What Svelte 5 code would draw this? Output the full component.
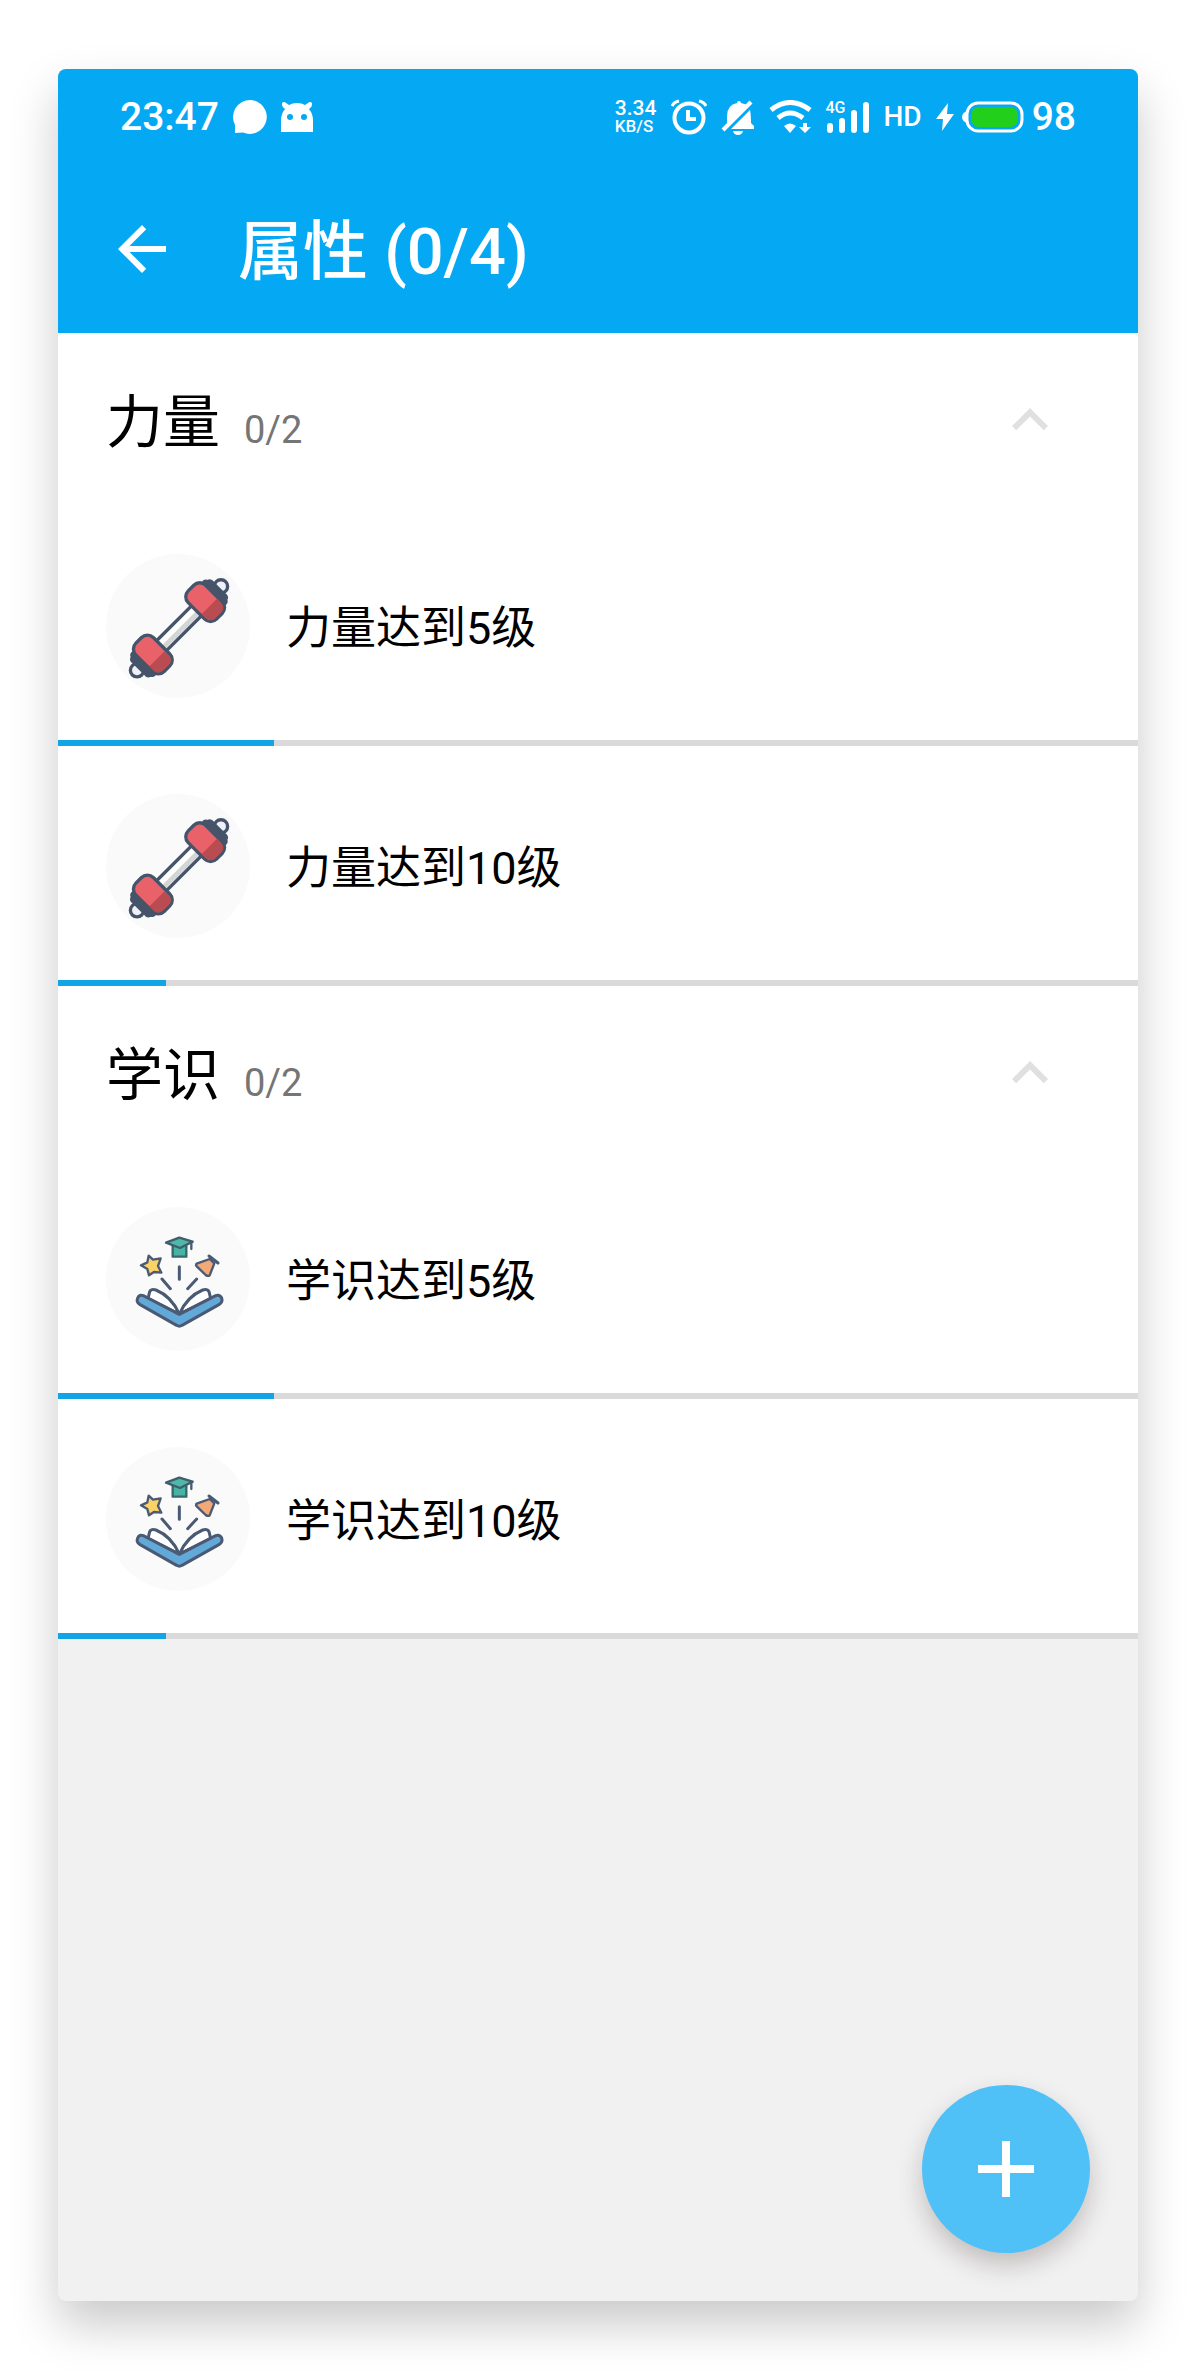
<script>
  let groups = $state([
    {
      name: '力量',
      icon: 'dumbbell',
      done: 0,
      open: true,
      items: [
        { level: 5, progress: 20 },
        { level: 10, progress: 10 },
      ],
    },
    {
      name: '学识',
      icon: 'book',
      done: 0,
      open: true,
      items: [
        { level: 5, progress: 20 },
        { level: 10, progress: 10 },
      ],
    },
  ]);

  const total = $derived(groups.reduce((n, g) => n + g.items.length, 0));
  const done = $derived(groups.reduce((n, g) => n + g.done, 0));
</script>

{#snippet dumbbell()}
  <svg class="picture" viewBox="48 42 432 432" aria-hidden="true">
    <g transform="translate(267 265) rotate(-45)" stroke="#46546a" stroke-width="10" stroke-linejoin="round">
      <rect x="-76" y="-21" width="152" height="42" fill="#fff" />
      <rect x="-72" y="0" width="144" height="15" fill="#d3d5d7" stroke="none" />
      {#each [1, -1] as side}
        <g transform="scale({side} 1)">
          <circle cx="178" cy="0" r="20" fill="#eef1fa" />
          <path d="M146 -44Q156 -48 160 -38Q170 -36 168 -24L168 24Q170 36 160 38Q156 48 146 44Z" fill="#46546a" />
          <rect x="74" y="-60" width="74" height="120" rx="25" fill="#e9626a" />
          <path d="M79 18H143V35Q143 55 123 55H99Q79 55 79 35Z" fill="#b94c50" stroke="none" />
        </g>
      {/each}
    </g>
  </svg>
{/snippet}

{#snippet book()}
  <svg class="picture" viewBox="48 51 432 432" aria-hidden="true">
    <g stroke="#4a5a72" stroke-width="9" stroke-linejoin="round" stroke-linecap="round" fill="none">
      <path d="M174 326L179 305Q184 296 198 300Q244 319 268 372Z" fill="#fff" />
      <path d="M362 326L357 305Q352 296 338 300Q292 319 268 372Z" fill="#fff" />
      <path d="M143 324Q148 312 160 317L268 373L377 317Q389 312 395 324Q399 336 388 343L276 406Q268 411 260 406L149 343Q138 336 143 324Z" fill="#62a9da" />
      <path d="M268 230V268M216 267L241 296M320 267L293 296" />
      <g stroke-width="7">
        <path d="M248 167V200H289V167" fill="#47b3a5" stroke="#3a6670" />
        <path d="M228 158L268 143L308 155L270 174Z" fill="#4eb8ab" stroke="#3f5f6c" />
        <path d="M304 157V177" />
        <path d="M176 197L189 209L212 205L204 228L214 248L192 246L177 256L172 237L153 226L172 217Z" fill="#fbd268" />
        <path d="M320 221L359 207L373 220L359 256Q354 260 347 255L321 230Q316 225 320 221Z" fill="#f2a877" />
        <path d="M357 198L384 219" stroke-width="9" />
      </g>
    </g>
  </svg>
{/snippet}

<main class="phone">
  <header class="top">
    <div class="status">
      <div class="cluster">
        <span class="figure">23:47</span>
        <svg width="34" height="36" viewBox="0 0 34 36" fill="#fff" aria-hidden="true">
          <path d="M17 1A17 17 0 1 1 10 33.600L2 34V26A17 17 0 0 1 17 1Z" />
        </svg>
        <svg width="32" height="30" viewBox="0 0 32 30" aria-hidden="true">
          <path d="M1 3L1 1Q3 -1 5 1L8 3Q11 1 16 1T24 3L27 1Q29 -1 31 1L31 3Q31 5 28 7Q32 12 32 18V30H0V18Q0 12 4 7Q1 5 1 3Z" fill="#fff" />
          <circle cx="9" cy="15" r="3" fill="#05a8f3" />
          <circle cx="23" cy="15" r="3" fill="#05a8f3" />
        </svg>
      </div>
      <div class="cluster">
        <span class="speed"><span class="rate">3.34</span><span class="unit">KB/S</span></span>
        <svg width="36" height="36" viewBox="0 0 36 36" fill="none" stroke="#fff" aria-hidden="true">
          <circle cx="18" cy="19" r="14.500" stroke-width="4" />
          <path d="M17 11V20H25" stroke-width="4" />
          <path d="M1 7Q3 3 8 2M28 2Q33 3 35 7" stroke-width="3" />
        </svg>
        <svg width="34" height="36" viewBox="0 0 34 36" fill="#fff" aria-hidden="true">
          <path d="M6 24V17Q6 6 16 4Q16 2 18 2T20 4Q24 5 26 6L6 26Z" />
          <path d="M12 28L29 11Q30 15 30 24L33 27V30H10Z" />
          <path d="M12 32H22Q21 36 17 36T12 32Z" />
          <path d="M2 31L30 3" stroke="#fff" stroke-width="4" />
        </svg>
        <svg width="43" height="34" viewBox="0 0 43 34" fill="none" stroke="#fff" aria-hidden="true">
          <path d="M2 10Q21 -5 41 10M9 18Q21 8 34 18" stroke-width="5" />
          <path d="M15 26Q21 21 27 26L21 33Z" fill="#fff" stroke="none" />
          <path d="M34 23H38V27H42L36 33L30 27H34Z" fill="#fff" stroke="none" />
        </svg>
        <span class="signal">
          <span class="network">4G</span>
          <svg width="44" height="34" viewBox="0 0 44 34" fill="none" stroke="#fff" stroke-width="6" stroke-linecap="round" aria-hidden="true">
            <path d="M4 26V30M16 21V30M28 13V30M40 5V30" />
          </svg>
        </span>
        <span class="hd">HD</span>
        <span class="battery">
          <svg width="18" height="28" viewBox="0 0 18 28" fill="#fff" aria-hidden="true">
            <path d="M12 0L0 16H7L6 28L18 11H11Z" />
          </svg>
          <svg width="62" height="32" viewBox="0 0 62 32" aria-hidden="true">
            <path d="M5 10Q0 12 0 16T5 22Z" fill="#fff" />
            <rect x="5" y="2" width="55" height="28" rx="11" fill="none" stroke="#fff" stroke-width="3" />
            <rect x="9" y="6" width="47" height="20" rx="8" fill="#22d01b" />
          </svg>
          <span class="figure">98</span>
        </span>
      </div>
    </div>
    <div class="appbar">
      <button class="plain" type="button" aria-label="返回">
        <svg width="72" height="72" viewBox="0 0 24 24" fill="#fff" aria-hidden="true">
          <path d="M20 11H7.830l5.590-5.590L12 4l-8 8 8 8 1.410-1.410L7.830 13H20v-2z" />
        </svg>
      </button>
      <h1>属性 ({done}/{total})</h1>
    </div>
  </header>

  {#each groups as group}
    <section>
      <div class="group">
        <h2>{group.name}</h2>
        <span class="count">{group.done}/{group.items.length}</span>
        <button
          class="plain toggle"
          class:closed={!group.open}
          type="button"
          aria-label={group.name}
          aria-expanded={group.open}
          onclick={() => (group.open = !group.open)}
        >
          <svg width="72" height="72" viewBox="0 0 24 24" fill="#e0e0e0" aria-hidden="true">
            <path d="M12 8l-6 6 1.410 1.410L12 10.830l4.590 4.580L18 14z" />
          </svg>
        </button>
      </div>
      {#if group.open}
        <ul>
          {#each group.items as item}
            <li>
              <div class="entry">
                <span class="badge">
                  {#if group.icon === 'dumbbell'}{@render dumbbell()}{:else}{@render book()}{/if}
                </span>
                <p>{group.name}达到{item.level}级</p>
              </div>
              <progress max="100" value={item.progress} aria-label="{group.name}达到{item.level}级"></progress>
            </li>
          {/each}
        </ul>
      {/if}
    </section>
  {/each}

  <button class="fab" type="button" aria-label="添加">
    <svg width="56" height="56" viewBox="0 0 56 56" fill="#fff" aria-hidden="true">
      <path d="M24 0h8v24h24v8H32v24h-8V32H0v-8h24z" />
    </svg>
  </button>
</main>

<style>
  :global(body) {
    background: #fff;
  }

  :global(#app) {
    display: flow-root;
  }

  .phone {
    position: relative;
    box-sizing: border-box;
    min-height: calc(100vh - 138px);
    margin: 69px 58px;
    overflow: hidden;
    border-radius: 8px;
    background: #f1f1f1;
    box-shadow: 0 24px 48px rgba(0, 0, 0, 0.21);
    color: #000;
    font-family: Roboto, 'Noto Sans CJK SC', sans-serif;
  }

  .plain {
    display: flex;
    padding: 0;
    border: 0;
    background: none;
    cursor: pointer;
  }

  .top {
    background: #05a8f3;
    color: #fff;
  }

  .status {
    display: flex;
    align-items: center;
    justify-content: space-between;
    height: 96px;
    padding: 0 62px;
  }

  .cluster {
    display: flex;
    align-items: center;
    gap: 14px;
  }

  .figure {
    font-size: 39px;
    font-weight: 500;
    line-height: 40px;
  }

  .speed {
    display: flex;
    flex-direction: column;
    font-weight: 500;
    line-height: 18px;
  }

  .rate {
    font-size: 21px;
  }

  .unit {
    font-size: 17px;
  }

  .signal {
    position: relative;
    display: flex;
  }

  .network {
    position: absolute;
    top: 0;
    left: 0;
    font-size: 16px;
    font-weight: 500;
    line-height: 16px;
  }

  .hd {
    font-size: 28px;
    font-weight: 500;
    line-height: 40px;
  }

  .battery {
    display: flex;
    align-items: center;
    gap: 8px;
  }

  .appbar {
    display: flex;
    align-items: center;
    gap: 60px;
    height: 168px;
    padding: 0 48px;
  }

  h1 {
    margin: 0;
    padding-top: 6px;
    font-size: 65px;
    font-weight: 500;
    line-height: 84px;
  }

  section {
    background: #fff;
  }

  .group {
    display: flex;
    align-items: center;
    gap: 24px;
    height: 173px;
    padding: 0 72px 0 48px;
  }

  h2 {
    margin: 0;
    padding-top: 6px;
    font-size: 57px;
    font-weight: 400;
    line-height: 84px;
  }

  .count {
    padding-top: 20px;
    color: #757575;
    font-size: 38px;
    line-height: 48px;
  }

  .toggle {
    margin-left: auto;
  }

  .closed {
    transform: rotate(180deg);
  }

  ul {
    margin: 0;
    padding: 0;
    list-style: none;
  }

  .entry {
    display: flex;
    align-items: center;
    gap: 36px;
    padding: 48px 48px 42px;
  }

  .badge {
    display: flex;
    width: 144px;
    height: 144px;
    border-radius: 50%;
    background: #fafafb;
  }

  .picture {
    width: 100%;
    height: 100%;
  }

  p {
    margin: 0;
    padding-top: 6px;
    font-size: 45px;
    line-height: 60px;
  }

  progress {
    display: block;
    width: 100%;
    height: 6px;
    border: 0;
    appearance: none;
    background: #dadada;
  }

  progress::-webkit-progress-bar {
    background: #dadada;
  }

  progress::-webkit-progress-value {
    background: #12a5e6;
  }

  .fab {
    position: absolute;
    right: 48px;
    bottom: 48px;
    display: flex;
    align-items: center;
    justify-content: center;
    width: 168px;
    height: 168px;
    padding: 0;
    border: 0;
    border-radius: 50%;
    background: #4fc1f7;
    box-shadow: 0 12px 24px rgba(60, 40, 40, 0.25);
    cursor: pointer;
  }
</style>
